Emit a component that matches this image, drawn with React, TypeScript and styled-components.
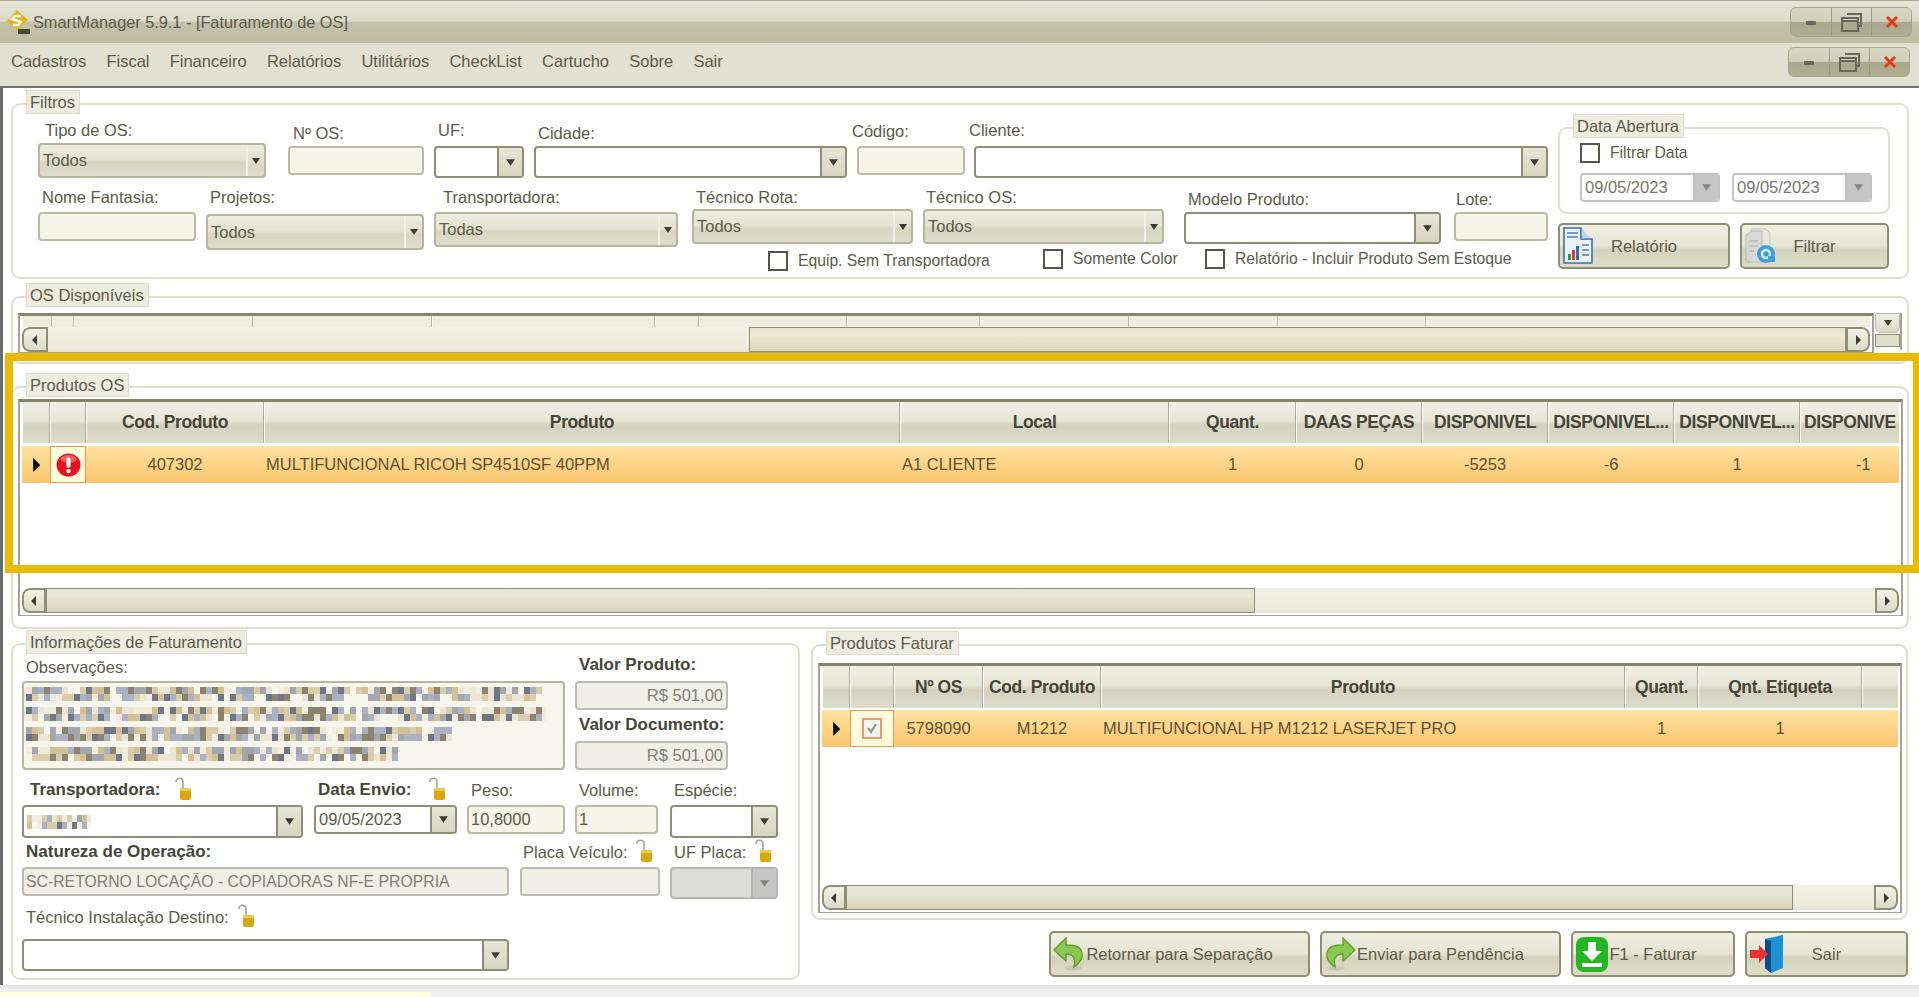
import styled, { createGlobalStyle } from "styled-components";

const GlobalStyle = createGlobalStyle`
  html, body {
    margin: 0;
    padding: 0;
    height: 100%;
    overflow: hidden;
    background: #f0f0f0;
  }
`;

const Page = styled.div`
  position: relative;
  display: flex;
  flex-direction: column;
  width: 1919px;
  height: 997px;
  overflow: hidden;
  font-family: "Liberation Sans", Arial, sans-serif;
  font-size: 16.5px;
  color: #5b5b49;
  filter: blur(0.45px);
`;

const TitleBar = styled.div`
  display: flex;
  align-items: center;
  box-sizing: border-box;
  height: 43px;
  padding: 0 7px;
  border-top: 1px solid #a9a9a0;
  background: linear-gradient(#e5e5d9 0%, #dcdccb 48%, #c2c1a9 50%, #bfbea5 100%);
`;

const TitleText = styled.span`
  margin-left: 2px;
  flex: 1;
  font-size: 16.3px;
`;

const MenuBar = styled.div`
  display: flex;
  align-items: center;
  box-sizing: border-box;
  height: 43px;
  padding: 0 9px 6px 11px;
  background: #e1e1d1;
`;

const MenuItem = styled.span`
  margin-right: 20.2px;
`;

const MenuSpacer = styled.div`
  flex: 1;
`;

const WindowButtons = styled.div`
  display: grid;
  grid-template-columns: repeat(3, 40px);
  height: 28px;
  border: 1px solid #a6a68e;
  border-radius: 6px;
  overflow: hidden;
  background: linear-gradient(#d8d8c6 0%, #cfcfba 48%, #a9a98f 52%, #aeae95 100%);
`;

const WindowButton = styled.div`
  display: flex;
  align-items: center;
  justify-content: center;
  border-left: 1px solid #9c9c84;
  &:first-child {
    border-left: 0;
  }
`;

const Content = styled.div`
  box-sizing: border-box;
  height: 899px;
  padding: 15px 10px 0 8px;
  border-top: 2px solid #70706a;
  border-left: 3px solid #6c6c6c;
  background: #fff;
`;

const Group = styled.div<{ $h: number; $mt?: number; $w?: number }>`
  position: relative;
  box-sizing: border-box;
  height: ${(p) => p.$h}px;
  width: ${(p) => (p.$w ? `${p.$w}px` : "auto")};
  margin-top: ${(p) => p.$mt ?? 0}px;
  border: 2px solid #dfdfd0;
  border-radius: 9px;
  background: #fff;
`;

const Legend = styled.div`
  position: absolute;
  top: -15px;
  left: 13px;
  box-sizing: border-box;
  height: 24px;
  padding: 0 4px 0 3px;
  line-height: 22px;
  border: 1px solid #dcdcc9;
  background: #ecece0;
  white-space: nowrap;
`;

const FilterLayout = styled.div`
  display: flex;
`;

const FilterLeft = styled.div`
  width: 1545px;
  padding-top: 15px;
`;

const FieldRow = styled.div<{ $h?: number; $mt?: number }>`
  display: flex;
  align-items: flex-start;
  height: ${(p) => (p.$h ? `${p.$h}px` : "auto")};
  margin-top: ${(p) => p.$mt ?? 0}px;
`;

const Field = styled.div<{ $w: number; $ml?: number; $mt?: number }>`
  flex: none;
  width: ${(p) => p.$w}px;
  margin-left: ${(p) => p.$ml ?? 0}px;
  margin-top: ${(p) => p.$mt ?? 0}px;
`;

const Label = styled.div<{ $lx?: number; $gap?: number; $bold?: boolean }>`
  display: flex;
  align-items: center;
  height: 20px;
  margin-left: ${(p) => p.$lx ?? 4}px;
  margin-bottom: ${(p) => p.$gap ?? 3}px;
  font-weight: ${(p) => (p.$bold ? 700 : 400)};
  font-size: ${(p) => (p.$bold ? "17px" : "inherit")};
  color: ${(p) => (p.$bold ? "#45453a" : "#5b5b49")};
  white-space: nowrap;
`;

const LockSlot = styled.span<{ $ml: number }>`
  display: inline-flex;
  margin-left: ${(p) => p.$ml}px;
  margin-top: -3px;
`;

const TextBox = styled.input<{ $h?: number; $right?: boolean; $off?: boolean; $size?: number }>`
  display: block;
  box-sizing: border-box;
  width: 100%;
  height: ${(p) => p.$h ?? 29}px;
  padding: 0 3px 0 2px;
  border: 2px solid ${(p) => (p.$off ? "#bcbcb4" : "#bcbca6")};
  border-radius: 4px;
  background: ${(p) => (p.$off ? "#efefe5" : "#f5f5ea")};
  color: ${(p) => (p.$off ? "#7f7f74" : "#5b5b49")};
  font: inherit;
  font-size: ${(p) => p.$size ?? 16.5}px;
  text-align: ${(p) => (p.$right ? "right" : "left")};
  outline: none;
`;

type ComboKind = "flat" | "field" | "muted" | "off";

const comboBg: Record<ComboKind, string> = {
  flat: "linear-gradient(#ecece1 0%, #e4e4d3 46%, #d7d7c1 56%, #dddccb 100%)",
  field: "#fff",
  muted: "#fff",
  off: "#dcdcd8",
};

const comboBorder: Record<ComboKind, string> = {
  flat: "#b6b69d",
  field: "#8e8e76",
  muted: "#c3c3c3",
  off: "#b6b6b0",
};

const ComboBox = styled.div<{ $h: number; $kind: ComboKind }>`
  display: flex;
  box-sizing: border-box;
  height: ${(p) => p.$h}px;
  border: 2px solid ${(p) => comboBorder[p.$kind]};
  border-radius: 4px;
  overflow: hidden;
  background: ${(p) => comboBg[p.$kind]};
`;

const ComboText = styled.div<{ $muted?: boolean }>`
  flex: 1;
  display: flex;
  align-items: center;
  padding-left: 3px;
  min-width: 0;
  color: ${(p) => (p.$muted ? "#77776c" : "#5b5b49")};
`;

const ComboDrop = styled.div<{ $kind: ComboKind }>`
  display: flex;
  align-items: center;
  justify-content: center;
  flex: none;
  width: ${(p) => (p.$kind === "flat" ? 16 : 23)}px;
  border-left: 2px solid ${(p) => (p.$kind === "flat" ? "#f0f0e6" : comboBorder[p.$kind])};
  background: ${(p) =>
    p.$kind === "flat"
      ? "transparent"
      : p.$kind === "field"
      ? "linear-gradient(#e6e6d6, #d6d6c0)"
      : "#c6c6c6"};
`;

const CheckRow = styled(FieldRow)`
  padding-left: 755px;
`;

const CheckItem = styled.div<{ $w?: number; $mt?: number }>`
  display: flex;
  align-items: center;
  flex: none;
  gap: 10px;
  width: ${(p) => (p.$w ? `${p.$w}px` : "auto")};
  margin-top: ${(p) => p.$mt ?? 0}px;
  font-size: 15.7px;
  white-space: nowrap;
`;

const CheckBox = styled.div`
  flex: none;
  box-sizing: border-box;
  width: 20px;
  height: 20px;
  border: 2px solid #55554e;
  background: #fff;
`;

const FilterRight = styled.div`
  width: 332px;
  padding-top: 22px;
`;

const DateInner = styled.div`
  padding: 14px 0 0 20px;
`;

const DateRow = styled.div`
  display: flex;
  gap: 12px;
  margin-top: 10px;
`;

const DatePick = styled.div`
  width: 140px;
`;

const ActionRow = styled.div<{ $mt?: number; $end?: boolean }>`
  display: flex;
  gap: 10px;
  margin-top: ${(p) => p.$mt ?? 0}px;
  justify-content: ${(p) => (p.$end ? "flex-end" : "flex-start")};
`;

const ActionButton = styled.div<{ $w: number }>`
  display: grid;
  grid-template-columns: 1fr auto 1fr;
  align-items: center;
  box-sizing: border-box;
  width: ${(p) => p.$w}px;
  height: 46px;
  padding: 0 2px;
  border: 2px solid #8e8e70;
  border-radius: 5px;
  background: linear-gradient(#eeeee2 0%, #e6e6d6 48%, #d4d4bd 58%, #dcdcc9 100%);
`;

const ActionIcon = styled.div`
  display: flex;
  justify-self: start;
  align-items: center;
  width: 0;
  svg {
    flex: none;
  }
`;

const GridRowOuter = styled.div<{ $pt: number }>`
  display: flex;
  padding: ${(p) => p.$pt}px 4px 0 5px;
`;

const GridFrame = styled.div<{ $w: number; $h: number }>`
  display: flex;
  flex-direction: column;
  flex: none;
  box-sizing: border-box;
  width: ${(p) => p.$w}px;
  height: ${(p) => p.$h}px;
  padding: 0 2px 2px;
  border-top: 3px solid #85856e;
  border-left: 2px solid #a4a494;
  border-right: 2px solid #a4a494;
  border-bottom: 1px solid #a4a494;
  background: #fff;
`;

const TableRow = styled.div<{ $cols: string; $h: number; $mt?: number }>`
  display: grid;
  grid-template-columns: ${(p) => p.$cols};
  flex: none;
  height: ${(p) => p.$h}px;
  margin-top: ${(p) => p.$mt ?? 0}px;
  overflow: hidden;
`;

const HeadCell = styled.div<{ $left?: boolean }>`
  display: flex;
  align-items: center;
  justify-content: ${(p) => (p.$left ? "flex-start" : "center")};
  padding-left: ${(p) => (p.$left ? 3 : 0)}px;
  box-sizing: border-box;
  min-width: 0;
  overflow: hidden;
  border-left: 1px solid #fbfbf4;
  border-right: 1px solid #aeae9c;
  background: linear-gradient(#f0f0e5 0%, #e6e6d7 46%, #d3d3c0 56%, #dddccb 100%);
  color: #45453a;
  font-weight: 700;
  font-size: 17.5px;
  letter-spacing: -0.4px;
  white-space: nowrap;
`;

const ThinHead = styled(HeadCell)`
  background: #edede2;
  border-right: 1px solid #b8b8a8;
`;

const DataCell = styled.div<{ $center?: boolean }>`
  display: flex;
  align-items: center;
  justify-content: ${(p) => (p.$center ? "center" : "flex-start")};
  padding-left: ${(p) => (p.$center ? 0 : 2)}px;
  min-width: 0;
  overflow: hidden;
  color: #5c5036;
  font-size: 16.5px;
  white-space: nowrap;
  background: linear-gradient(#ffe2a2, #f9c56d);
`;

const RowMark = styled(DataCell)`
  padding-left: 7px;
`;

const FocusCell = styled.div`
  display: flex;
  align-items: center;
  justify-content: center;
  border: 1px solid #f0994a;
  background: #fffbdd;
`;

const TableGap = styled.div`
  flex: 1;
`;

const ScrollBar = styled.div`
  display: flex;
  flex: none;
  height: 25px;
  border-radius: 8px;
  overflow: hidden;
  background: linear-gradient(#f1f1e4 0%, #edecdc 80%, #e4e4d6 100%);
`;

const ScrollEnd = styled.div<{ $w: number; $right?: boolean }>`
  display: flex;
  align-items: center;
  justify-content: center;
  flex: none;
  box-sizing: border-box;
  width: ${(p) => p.$w}px;
  border: 2px solid #8f8f76;
  border-radius: ${(p) => (p.$right ? "0 8px 8px 0" : "8px 0 0 8px")};
  background: linear-gradient(#f1f1e6, #dcdcc9);
`;

const ScrollThumb = styled.div<{ $w?: number; $tan?: boolean }>`
  flex: ${(p) => (p.$w ? "none" : 1)};
  width: ${(p) => (p.$w ? `${p.$w}px` : "auto")};
  box-sizing: border-box;
  border: 1px solid #8f8f76;
  background: ${(p) =>
    p.$tan
      ? "linear-gradient(#e9e6cf 0%, #ece9d6 30%, #dbd7b8 100%)"
      : "linear-gradient(#e4e4d2 0%, #e9e9da 30%, #d6d3ba 100%)"};
`;

const ScrollTrack = styled.div<{ $w?: number }>`
  flex: ${(p) => (p.$w ? "none" : 1)};
  width: ${(p) => (p.$w ? `${p.$w}px` : "auto")};
`;

const SideScroll = styled.div`
  flex: none;
  width: 25px;
  height: 37px;
  margin-left: 1px;
  border-right: 2px solid #a4a494;
`;

const SideButton = styled.div`
  display: flex;
  align-items: center;
  justify-content: center;
  box-sizing: border-box;
  height: 20px;
  border: 1px solid #b9b9a2;
  border-radius: 0 0 6px 6px;
  background: linear-gradient(#f0f0e4, #dcdcc8);
`;

const SideThumb = styled.div`
  height: 11px;
  margin-top: 1px;
  border: 1px solid #8f8f76;
  background: #dedecb;
`;

const BottomArea = styled.div`
  display: flex;
  gap: 11px;
  margin-top: 14px;
`;

const InvoiceSide = styled.div`
  width: 1097px;
`;

const ObsRow = styled(FieldRow)`
  padding-top: 12px;
`;

const ObsBox = styled.div`
  box-sizing: border-box;
  height: 89px;
  padding: 4px 2px;
  border: 2px solid #b5b5a0;
  border-radius: 4px;
  background: #f6f6ec;
`;

const ValueStack = styled.div`
  flex: none;
  width: 153px;
  margin-left: 10px;
  margin-top: -2px;
`;

const ValueLabel = styled(Label)`
  margin-left: 4px;
  margin-bottom: 6px;
`;

const ValueSpacer = styled.div`
  height: 5px;
`;

const Footer = styled.div`
  display: flex;
  align-items: flex-end;
  flex: 1;
  border-top: 3px solid #e6e6e6;
`;

const Hint = styled.div`
  width: 431px;
  height: 5px;
  background: #ffffe6;
`;

const Highlight = styled.div`
  position: absolute;
  left: 5px;
  top: 353px;
  width: 1914px;
  height: 220px;
  box-sizing: border-box;
  border: 8px solid #e8b905;
  border-right-width: 6px;
  pointer-events: none;
`;

function Arrow({ dir, size = 10, color = "#3c3c30" }: { dir: "down" | "left" | "right"; size?: number; color?: string }) {
  const points = dir === "down" ? "1,2 9,2 5,8" : dir === "left" ? "7,0 7,10 2,5" : "3,0 3,10 8,5";
  return (
    <svg width={size} height={size} viewBox="0 0 10 10">
      <polygon points={points} fill={color} />
    </svg>
  );
}

function Logo() {
  return (
    <svg width="24" height="25" viewBox="0 0 24 25">
      <polygon points="10,0 21,10 10,20 0,11" fill="#e8b414" />
      <path d="M14 6 L8 6 L5 9 L14 12 L11 15 L6 15" fill="none" stroke="#fff" strokeWidth="2.4" />
      <rect x="11" y="19" width="12" height="5" fill="#4a4a30" />
    </svg>
  );
}

function WindowControls() {
  return (
    <WindowButtons>
      <WindowButton>
        <svg width="14" height="8" viewBox="0 0 14 8">
          <rect x="2" y="3" width="10" height="4" rx="1" fill="#66665a" />
        </svg>
      </WindowButton>
      <WindowButton>
        <svg width="24" height="22" viewBox="0 0 24 22" fill="none" stroke="#66665a" strokeWidth="2">
          <path d="M7 3 H21 V15 H18" />
          <rect x="2" y="7" width="16" height="13" />
          <path d="M2 10 H18" />
        </svg>
      </WindowButton>
      <WindowButton>
        <svg width="14" height="14" viewBox="0 0 14 14" stroke="#e83a12" strokeWidth="3">
          <path d="M2 2 L12 12 M12 2 L2 12" />
        </svg>
      </WindowButton>
    </WindowButtons>
  );
}

function Lock() {
  return (
    <svg width="19" height="24" viewBox="0 0 19 24">
      <path d="M2 5 C2 0 9 0 9 5 V12" fill="none" stroke="#a6a69c" strokeWidth="1.6" />
      <rect x="6" y="11" width="11" height="12" rx="2" fill="#d9a70f" />
      <rect x="6" y="11" width="11" height="3" fill="#eccb4c" />
    </svg>
  );
}

function AlertIcon() {
  return (
    <svg width="25" height="24" viewBox="0 0 25 24">
      <ellipse cx="12.5" cy="12" rx="12" ry="11.5" fill="#e3141e" />
      <ellipse cx="12.5" cy="6" rx="8" ry="4" fill="#f25b60" />
      <rect x="10.5" y="4.5" width="4" height="10" rx="1.5" fill="#fff" />
      <circle cx="12.5" cy="18" r="2.2" fill="#fff" />
    </svg>
  );
}

function TickBox() {
  return (
    <svg width="20" height="21" viewBox="0 0 20 21">
      <rect x="1" y="1" width="18" height="19" fill="#f3f3ee" stroke="#e8824a" strokeWidth="1.6" />
      <path d="M6 10 L9 14 L14 6" fill="none" stroke="#8e8e8e" strokeWidth="2" />
    </svg>
  );
}

function ReportIcon() {
  return (
    <svg width="32" height="38" viewBox="0 0 32 38">
      <path d="M2 1 H19 V12 H30 V36 H2 Z" fill="#eaf2fb" stroke="#3f6fb0" strokeWidth="1.6" />
      <path d="M19 1 V12 H30" fill="#bcd3ee" stroke="#3f6fb0" strokeWidth="1.2" />
      <path d="M5 6 H16 M5 10 H16 M20 18 H27 M20 23 H27 M20 28 H27" stroke="#4c7fc0" strokeWidth="1.6" />
      <rect x="6" y="27" width="3" height="6" fill="#2d9b3c" />
      <rect x="10" y="23" width="3" height="10" fill="#d93a2e" />
      <rect x="14" y="19" width="3" height="14" fill="#2c6fc0" />
    </svg>
  );
}

function FilterIcon() {
  return (
    <svg width="32" height="38" viewBox="0 0 32 38">
      <path d="M7 2 H22 L26 6 V32 H7 Z" fill="#e7e7e4" stroke="#c2c2bc" />
      <path d="M2 8 L8 4 H18 V35 H2 Z" fill="#d9d9d5" stroke="#b9b9b3" />
      <path d="M5 14 H14 M5 19 H14 M5 24 H10" stroke="#bdbdb6" strokeWidth="1.6" />
      <circle cx="22" cy="27" r="9" fill="#3c9fe0" />
      <circle cx="22" cy="27" r="4" fill="none" stroke="#d9f0fb" strokeWidth="2.4" />
      <rect x="24" y="29" width="7" height="6" fill="#3c9fe0" />
    </svg>
  );
}

function BackArrow({ flip }: { flip?: boolean }) {
  return (
    <svg width="32" height="34" viewBox="0 0 32 34" style={flip ? { transform: "scaleX(-1)" } : undefined}>
      <ellipse cx="20" cy="31" rx="9" ry="2.5" fill="#c6c6b2" />
      <path
        d="M13 1 L1 13 L13 24 V17 C20 17 23 21 21 30 C28 25 31 19 28 13 C26 9 20 8 13 8 Z"
        fill="#8cc850"
        stroke="#5f9e2e"
        strokeWidth="1.4"
      />
    </svg>
  );
}

function SaveIcon() {
  return (
    <svg width="34" height="37" viewBox="0 0 34 37">
      <rect x="1" y="1" width="32" height="35" rx="8" fill="#21b821" />
      <path d="M13 6 H21 V15 H27 L17 25 L7 15 H13 Z" fill="#fff" />
      <rect x="7" y="27" width="20" height="4" fill="#fff" />
    </svg>
  );
}

function DoorIcon() {
  return (
    <svg width="38" height="38" viewBox="0 0 38 38">
      <polygon points="16,4 34,0 34,33 22,38 16,33" fill="#1f8fd6" />
      <polygon points="16,4 22,6 22,38 16,33" fill="#0d4d8c" />
      <polygon points="1,15 10,15 10,10 19,19 10,28 10,23 1,23" fill="#ef3030" />
    </svg>
  );
}

// deixa o texto pixelado como no print, com sementes fixas
function Mosaic({ widths, cell = 6, rowH = 20, seed = 7 }: { widths: number[]; cell?: number; rowH?: number; seed?: number }) {
  const colors = ["#f6f6ec", "#ebe6d4", "#d8ccab", "#a2a6ad", "#6f7686", "#d3c096", "#8c8270", "#a9b1c2", "#f1ecdb"];
  let state = seed;
  const next = () => {
    state = (state * 16807) % 2147483647;
    return state;
  };
  const rects: { x: number; y: number; c: string }[] = [];
  widths.forEach((w, r) => {
    for (let i = 0; i * cell < w; i++) {
      for (let j = 0; j < 2; j++) {
        rects.push({ x: i * cell, y: r * rowH + j * 7, c: colors[next() % colors.length] });
      }
    }
  });
  const max = Math.max(...widths);
  return (
    <svg width={max} height={widths.length * rowH} style={{ display: "block" }}>
      {rects.map((b, i) => (
        <rect key={i} x={b.x} y={b.y} width={cell} height={7} fill={b.c} />
      ))}
    </svg>
  );
}

function Combo({ h = 32, kind = "field", text, muted }: { h?: number; kind?: ComboKind; text?: React.ReactNode; muted?: boolean }) {
  return (
    <ComboBox $h={h} $kind={kind}>
      <ComboText $muted={muted}>{text}</ComboText>
      <ComboDrop $kind={kind}>
        <Arrow dir="down" size={kind === "flat" ? 10 : 11} color={kind === "muted" || kind === "off" ? "#85857f" : "#3c3c30"} />
      </ComboDrop>
    </ComboBox>
  );
}

const osColumns = [30, 22, 179, 179, 223, 44, 148, 133, 149, 149, 148, 450];
const productHeads = ["", "", "Cod. Produto", "Produto", "Local", "Quant.", "DAAS PEÇAS", "DISPONIVEL", "DISPONIVEL...", "DISPONIVEL..."];
const productCols = "28px 36px 178px 636px 269px 127px 126px 126px 126px 126px 126px";
const invoiceHeads = ["", "", "Nº OS", "Cod. Produto", "Produto", "Quant.", "Qnt. Etiqueta", ""];
const invoiceCols = "28px 44px 89px 118px 524px 73px 164px 40px";

function App() {
  return (
    <Page>
      <GlobalStyle />
      <TitleBar>
        <Logo />
        <TitleText>SmartManager 5.9.1 - [Faturamento de OS]</TitleText>
        <WindowControls />
      </TitleBar>
      <MenuBar>
        {["Cadastros", "Fiscal", "Financeiro", "Relatórios", "Utilitários", "CheckList", "Cartucho", "Sobre", "Sair"].map((m) => (
          <MenuItem key={m}>{m}</MenuItem>
        ))}
        <MenuSpacer />
        <WindowControls />
      </MenuBar>
      <Content>
        <Group $h={176}>
          <Legend>Filtros</Legend>
          <FilterLayout>
            <FilterLeft>
              <FieldRow $h={67}>
                <Field $w={228} $ml={25}>
                  <Label $lx={7}>Tipo de OS:</Label>
                  <Combo h={35} kind="flat" text="Todos" />
                </Field>
                <Field $w={136} $ml={22} $mt={3}>
                  <Label $lx={5}>Nº OS:</Label>
                  <TextBox readOnly />
                </Field>
                <Field $w={90} $ml={10}>
                  <Label $gap={6}>UF:</Label>
                  <Combo />
                </Field>
                <Field $w={313} $ml={10} $mt={3}>
                  <Label>Cidade:</Label>
                  <Combo />
                </Field>
                <Field $w={108} $ml={10} $mt={1}>
                  <Label $lx={-5} $gap={5}>Código:</Label>
                  <TextBox readOnly />
                </Field>
                <Field $w={574} $ml={9}>
                  <Label $lx={-5} $gap={6}>Cliente:</Label>
                  <Combo />
                </Field>
              </FieldRow>
              <FieldRow $h={62}>
                <Field $w={158} $ml={25}>
                  <Label $gap={5}>Nome Fantasia:</Label>
                  <TextBox readOnly />
                </Field>
                <Field $w={218} $ml={10}>
                  <Label $gap={7}>Projetos:</Label>
                  <Combo h={36} kind="flat" text="Todos" />
                </Field>
                <Field $w={244} $ml={10}>
                  <Label $lx={9} $gap={5}>Transportadora:</Label>
                  <Combo h={35} kind="flat" text="Todas" />
                </Field>
                <Field $w={221} $ml={14}>
                  <Label $gap={2}>Técnico Rota:</Label>
                  <Combo h={35} kind="flat" text="Todos" />
                </Field>
                <Field $w={241} $ml={10}>
                  <Label $lx={3} $gap={2}>Técnico OS:</Label>
                  <Combo h={35} kind="flat" text="Todos" />
                </Field>
                <Field $w={257} $ml={20} $mt={2}>
                  <Label>Modelo Produto:</Label>
                  <Combo />
                </Field>
                <Field $w={94} $ml={13} $mt={2}>
                  <Label $lx={2}>Lote:</Label>
                  <TextBox readOnly />
                </Field>
              </FieldRow>
              <CheckRow>
                <CheckItem $w={275} $mt={2}>
                  <CheckBox />
                  Equip. Sem Transportadora
                </CheckItem>
                <CheckItem $w={162}>
                  <CheckBox />
                  Somente Color
                </CheckItem>
                <CheckItem>
                  <CheckBox />
                  Relatório - Incluir Produto Sem Estoque
                </CheckItem>
              </CheckRow>
            </FilterLeft>
            <FilterRight>
              <Group $h={87}>
                <Legend>Data Abertura</Legend>
                <DateInner>
                  <CheckItem>
                    <CheckBox />
                    Filtrar Data
                  </CheckItem>
                  <DateRow>
                    <DatePick>
                      <Combo h={29} kind="muted" text="09/05/2023" muted />
                    </DatePick>
                    <DatePick>
                      <Combo h={29} kind="muted" text="09/05/2023" muted />
                    </DatePick>
                  </DateRow>
                </DateInner>
              </Group>
              <ActionRow $mt={9}>
                <ActionButton $w={172}>
                  <ActionIcon><ReportIcon /></ActionIcon>
                  <span>Relatório</span>
                </ActionButton>
                <ActionButton $w={149}>
                  <ActionIcon><FilterIcon /></ActionIcon>
                  <span>Filtrar</span>
                </ActionButton>
              </ActionRow>
            </FilterRight>
          </FilterLayout>
        </Group>

        <Group $h={68} $mt={17}>
          <Legend>OS Disponíveis</Legend>
          <GridRowOuter $pt={15}>
            <GridFrame $w={1856} $h={40}>
              <TableRow $cols={osColumns.map((c) => `${c}px`).join(" ")} $h={11}>
                {osColumns.map((c, i) => (
                  <ThinHead key={i} />
                ))}
              </TableRow>
              <ScrollBar>
                <ScrollEnd $w={26}><Arrow dir="left" /></ScrollEnd>
                <ScrollTrack $w={701} />
                <ScrollThumb $tan />
                <ScrollEnd $w={24} $right><Arrow dir="right" /></ScrollEnd>
              </ScrollBar>
            </GridFrame>
            <SideScroll>
              <SideButton><Arrow dir="down" /></SideButton>
              <SideThumb />
            </SideScroll>
          </GridRowOuter>
        </Group>

        <Group $h={243} $mt={22}>
          <Legend>Produtos OS</Legend>
          <GridRowOuter $pt={11}>
            <GridFrame $w={1885} $h={217}>
              <TableRow $cols={productCols} $h={41}>
                {productHeads.map((h, i) => (
                  <HeadCell key={i}>{h}</HeadCell>
                ))}
                <HeadCell $left>DISPONIVE</HeadCell>
              </TableRow>
              <TableRow $cols={productCols} $h={37} $mt={3}>
                <RowMark><Arrow dir="right" size={14} color="#000" /></RowMark>
                <FocusCell><AlertIcon /></FocusCell>
                <DataCell $center>407302</DataCell>
                <DataCell>MULTIFUNCIONAL RICOH SP4510SF 40PPM</DataCell>
                <DataCell>A1 CLIENTE</DataCell>
                <DataCell $center>1</DataCell>
                <DataCell $center>0</DataCell>
                <DataCell $center>-5253</DataCell>
                <DataCell $center>-6</DataCell>
                <DataCell $center>1</DataCell>
                <DataCell $center>-1</DataCell>
              </TableRow>
              <TableGap />
              <ScrollBar>
                <ScrollEnd $w={24}><Arrow dir="left" /></ScrollEnd>
                <ScrollThumb $w={1209} />
                <ScrollTrack />
                <ScrollEnd $w={24} $right><Arrow dir="right" /></ScrollEnd>
              </ScrollBar>
            </GridFrame>
          </GridRowOuter>
        </Group>

        <BottomArea>
          <Group $h={337} $w={789}>
            <Legend>Informações de Faturamento</Legend>
            <ObsRow>
              <Field $w={543} $ml={9}>
                <Label $gap={4}>Observações:</Label>
                <ObsBox>
                  <Mosaic widths={[514, 520, 425, 370]} />
                </ObsBox>
              </Field>
              <ValueStack>
                <ValueLabel $bold>Valor Produto:</ValueLabel>
                <TextBox readOnly $off $right value="R$ 501,00" />
                <ValueSpacer />
                <ValueLabel $bold>Valor Documento:</ValueLabel>
                <TextBox readOnly $off $right value="R$ 501,00" />
              </ValueStack>
            </ObsRow>
            <FieldRow $mt={10}>
              <Field $w={281} $ml={9}>
                <Label $lx={8} $gap={5} $bold>
                  Transportadora:<LockSlot $ml={14}><Lock /></LockSlot>
                </Label>
                <Combo h={33} text={<Mosaic widths={[64]} cell={5} rowH={14} seed={23} />} />
              </Field>
              <Field $w={143} $ml={11}>
                <Label $gap={5} $bold>
                  Data Envio:<LockSlot $ml={16}><Lock /></LockSlot>
                </Label>
                <Combo h={29} text="09/05/2023" />
              </Field>
              <Field $w={98} $ml={10}>
                <Label $gap={5}>Peso:</Label>
                <TextBox readOnly value="10,8000" />
              </Field>
              <Field $w={83} $ml={10}>
                <Label $gap={5}>Volume:</Label>
                <TextBox readOnly value="1" />
              </Field>
              <Field $w={108} $ml={12}>
                <Label $gap={5}>Espécie:</Label>
                <Combo h={33} />
              </Field>
            </FieldRow>
            <FieldRow $mt={4}>
              <Field $w={487} $ml={9}>
                <Label $gap={5} $bold>Natureza de Operação:</Label>
                <TextBox readOnly $off $size={15.8} value="SC-RETORNO LOCAÇÃO - COPIADORAS NF-E PROPRIA" />
              </Field>
              <Field $w={140} $ml={11}>
                <Label $lx={3} $gap={5}>
                  Placa Veículo:<LockSlot $ml={7}><Lock /></LockSlot>
                </Label>
                <TextBox readOnly $off />
              </Field>
              <Field $w={108} $ml={10}>
                <Label $gap={5}>
                  UF Placa:<LockSlot $ml={8}><Lock /></LockSlot>
                </Label>
                <Combo kind="off" />
              </Field>
            </FieldRow>
            <FieldRow $mt={8}>
              <Field $w={487} $ml={9}>
                <Label $gap={12}>
                  Técnico Instalação Destino:<LockSlot $ml={8}><Lock /></LockSlot>
                </Label>
                <Combo />
              </Field>
            </FieldRow>
          </Group>

          <InvoiceSide>
            <Group $h={276} $mt={1}>
              <Legend>Produtos Faturar</Legend>
              <GridRowOuter $pt={17}>
                <GridFrame $w={1084} $h={250}>
                  <TableRow $cols={invoiceCols} $h={42}>
                    {invoiceHeads.map((h, i) => (
                      <HeadCell key={i}>{h}</HeadCell>
                    ))}
                  </TableRow>
                  <TableRow $cols={invoiceCols} $h={37} $mt={2}>
                    <RowMark><Arrow dir="right" size={14} color="#000" /></RowMark>
                    <FocusCell><TickBox /></FocusCell>
                    <DataCell $center>5798090</DataCell>
                    <DataCell $center>M1212</DataCell>
                    <DataCell>MULTIFUNCIONAL HP M1212 LASERJET PRO</DataCell>
                    <DataCell $center>1</DataCell>
                    <DataCell $center>1</DataCell>
                    <DataCell />
                  </TableRow>
                  <TableGap />
                  <ScrollBar>
                    <ScrollEnd $w={24}><Arrow dir="left" /></ScrollEnd>
                    <ScrollThumb $w={947} />
                    <ScrollTrack />
                    <ScrollEnd $w={24} $right><Arrow dir="right" /></ScrollEnd>
                  </ScrollBar>
                </GridFrame>
              </GridRowOuter>
            </Group>
            <ActionRow $mt={11} $end>
              <ActionButton $w={261}>
                <ActionIcon><BackArrow /></ActionIcon>
                <span>Retornar para Separação</span>
              </ActionButton>
              <ActionButton $w={241}>
                <ActionIcon><BackArrow flip /></ActionIcon>
                <span>Enviar para Pendência</span>
              </ActionButton>
              <ActionButton $w={164}>
                <ActionIcon><SaveIcon /></ActionIcon>
                <span>F1 - Faturar</span>
              </ActionButton>
              <ActionButton $w={163}>
                <ActionIcon><DoorIcon /></ActionIcon>
                <span>Sair</span>
              </ActionButton>
            </ActionRow>
          </InvoiceSide>
        </BottomArea>
      </Content>
      <Footer>
        <Hint />
      </Footer>
      <Highlight />
    </Page>
  );
}

export default App;
